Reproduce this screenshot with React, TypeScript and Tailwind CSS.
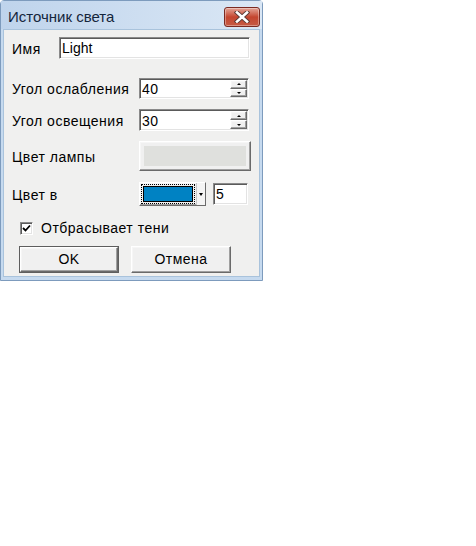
import React from 'react'

const font = { fontFamily: '"Liberation Sans", Arial, sans-serif' }

// sunken edit frame like classic Windows
const sunken =
    'border border-t-[#8a8a8a] border-l-[#8a8a8a] border-b-white border-r-white shadow-[inset_1px_1px_0_#5a5a5a,inset_-1px_-1px_0_#e3e3e3] bg-white'

const raised =
    'border border-t-white border-l-white border-b-[#6a6a6a] border-r-[#6a6a6a] shadow-[inset_-1px_-1px_0_#a0a0a0,inset_1px_1px_0_#f6f6f6] bg-[#f0f0f0]'

function SpinBox({ value }: { value: string }) {
    return (
        <div className={`flex w-[110px] h-full ${sunken}`}>
            <div className="flex-1 pl-[2px] pt-[1px] flex items-center text-[14px] text-black leading-none">{value}</div>
            <div className="flex flex-col w-[18px] py-[1px] pr-[1px]">
                <div className={`flex-1 flex items-center justify-center ${raised}`}>
                    <div className="w-0 h-0 border-l-[2px] border-r-[2px] border-b-[2px] border-l-transparent border-r-transparent border-b-black" />
                </div>
                <div className={`flex-1 flex items-center justify-center ${raised}`}>
                    <div className="w-0 h-0 border-l-[2px] border-r-[2px] border-t-[2px] border-l-transparent border-r-transparent border-t-black" />
                </div>
            </div>
        </div>
    )
}

function CloseButton() {
    return (
        <div className="w-[36px] h-[20px] rounded-[3px] border border-[#7a2a22] bg-gradient-to-b from-[#e2a497] via-[#c4452f] to-[#c65a44] flex items-center justify-center shadow-[inset_0_0_0_1px_rgba(255,255,255,0.35)]">
            <svg width="16" height="12" viewBox="0 0 16 12">
                <path d="M3 1.5 L13 10.5 M13 1.5 L3 10.5" stroke="#5a3a36" strokeWidth="4.4" strokeLinecap="square" />
                <path d="M3 1.5 L13 10.5 M13 1.5 L3 10.5" stroke="#ffffff" strokeWidth="2.6" strokeLinecap="square" />
            </svg>
        </div>
    )
}

export default function App() {
    return (
        <div className="w-full min-h-[546px] bg-white" style={font}>
            <div className="w-[263px] h-[281px] flex flex-col bg-[#c6daef] border border-[#7d9bbd] rounded-t-[4px]">
                {/* Title bar */}
                <div className="h-[28px] flex items-center justify-between pl-[7px] pr-[2px] bg-gradient-to-r from-[#bfd4ec] to-[#dae7f5]">
                    <span className="text-[15px] text-[#15263c] leading-none mt-[3px]">Источник света</span>
                    <div className="mt-[3px]">
                        <CloseButton />
                    </div>
                </div>

                {/* Client area */}
                <div className="flex-1 mx-[2px] mb-[3px] bg-[#f0f0ef] border border-[#a9c3dc] flex flex-col pl-[8px] pt-[7px] text-[14px] tracking-[0.5px] text-black">
                    <div className="h-[22px] flex items-center">
                        <span className="w-[47px] pt-[2px]">Имя</span>
                        <div className={`w-[191px] h-full flex items-center pl-[2px] pt-[1px] tracking-normal ${sunken}`}>Light</div>
                    </div>

                    <div className="h-[21px] mt-[19px] flex items-center">
                        <span className="w-[127px] pt-[2px]">Угол ослабления</span>
                        <SpinBox value="40" />
                    </div>

                    <div className="h-[22px] mt-[10px] flex items-center">
                        <span className="w-[127px] pt-[2px]">Угол освещения</span>
                        <SpinBox value="30" />
                    </div>

                    <div className="h-[30px] mt-[10px] flex items-center">
                        <span className="w-[127px] pt-[2px]">Цвет лампы</span>
                        <div className={`w-[112px] h-full p-[4px] ${raised}`}>
                            <div className="w-full h-full bg-[#dfe0dd]" />
                        </div>
                    </div>

                    <div className="h-[24px] mt-[11px] flex items-center">
                        <span className="w-[127px] pt-[2px]">Цвет в</span>
                        <div className={`w-[67px] h-full flex ${raised}`}>
                            <div className="flex-1 border border-dotted border-black m-[1px] p-[1px]">
                                <div className="w-full h-full bg-[#0082c3] border border-black" />
                            </div>
                            <div className="w-[9px] flex items-center justify-center border-l border-[#c8c8c8] bg-[#f4f4f4]">
                                <div className="w-0 h-0 border-l-[2px] border-r-[2px] border-t-[3px] border-l-transparent border-r-transparent border-t-black" />
                            </div>
                        </div>
                        <div className={`ml-[7px] w-[35px] h-[22px] flex items-center pl-[2px] pt-[1px] ${sunken}`}>5</div>
                    </div>

                    <div className="h-[13px] mt-[16px] ml-[8px] flex items-center">
                        <div className={`w-[13px] h-[13px] flex items-center justify-center ${sunken}`}>
                            <svg width="9" height="9" viewBox="0 0 9 9">
                                <path d="M1 4 L3.5 6.5 L8 1.5" stroke="#000" strokeWidth="1.8" fill="none" />
                            </svg>
                        </div>
                        <span className="ml-[8px]">Отбрасывает тени</span>
                    </div>

                    <div className="h-[27px] mt-[11px] ml-[7px] flex items-center gap-[12px]">
                        <div className="w-[100px] h-full border border-[#5e5e5e] flex">
                            <div className={`flex-1 flex items-center justify-center ${raised}`}>OK</div>
                        </div>
                        <div className={`w-[100px] h-full flex items-center justify-center ${raised}`}>Отмена</div>
                    </div>
                </div>
            </div>
        </div>
    )
}
